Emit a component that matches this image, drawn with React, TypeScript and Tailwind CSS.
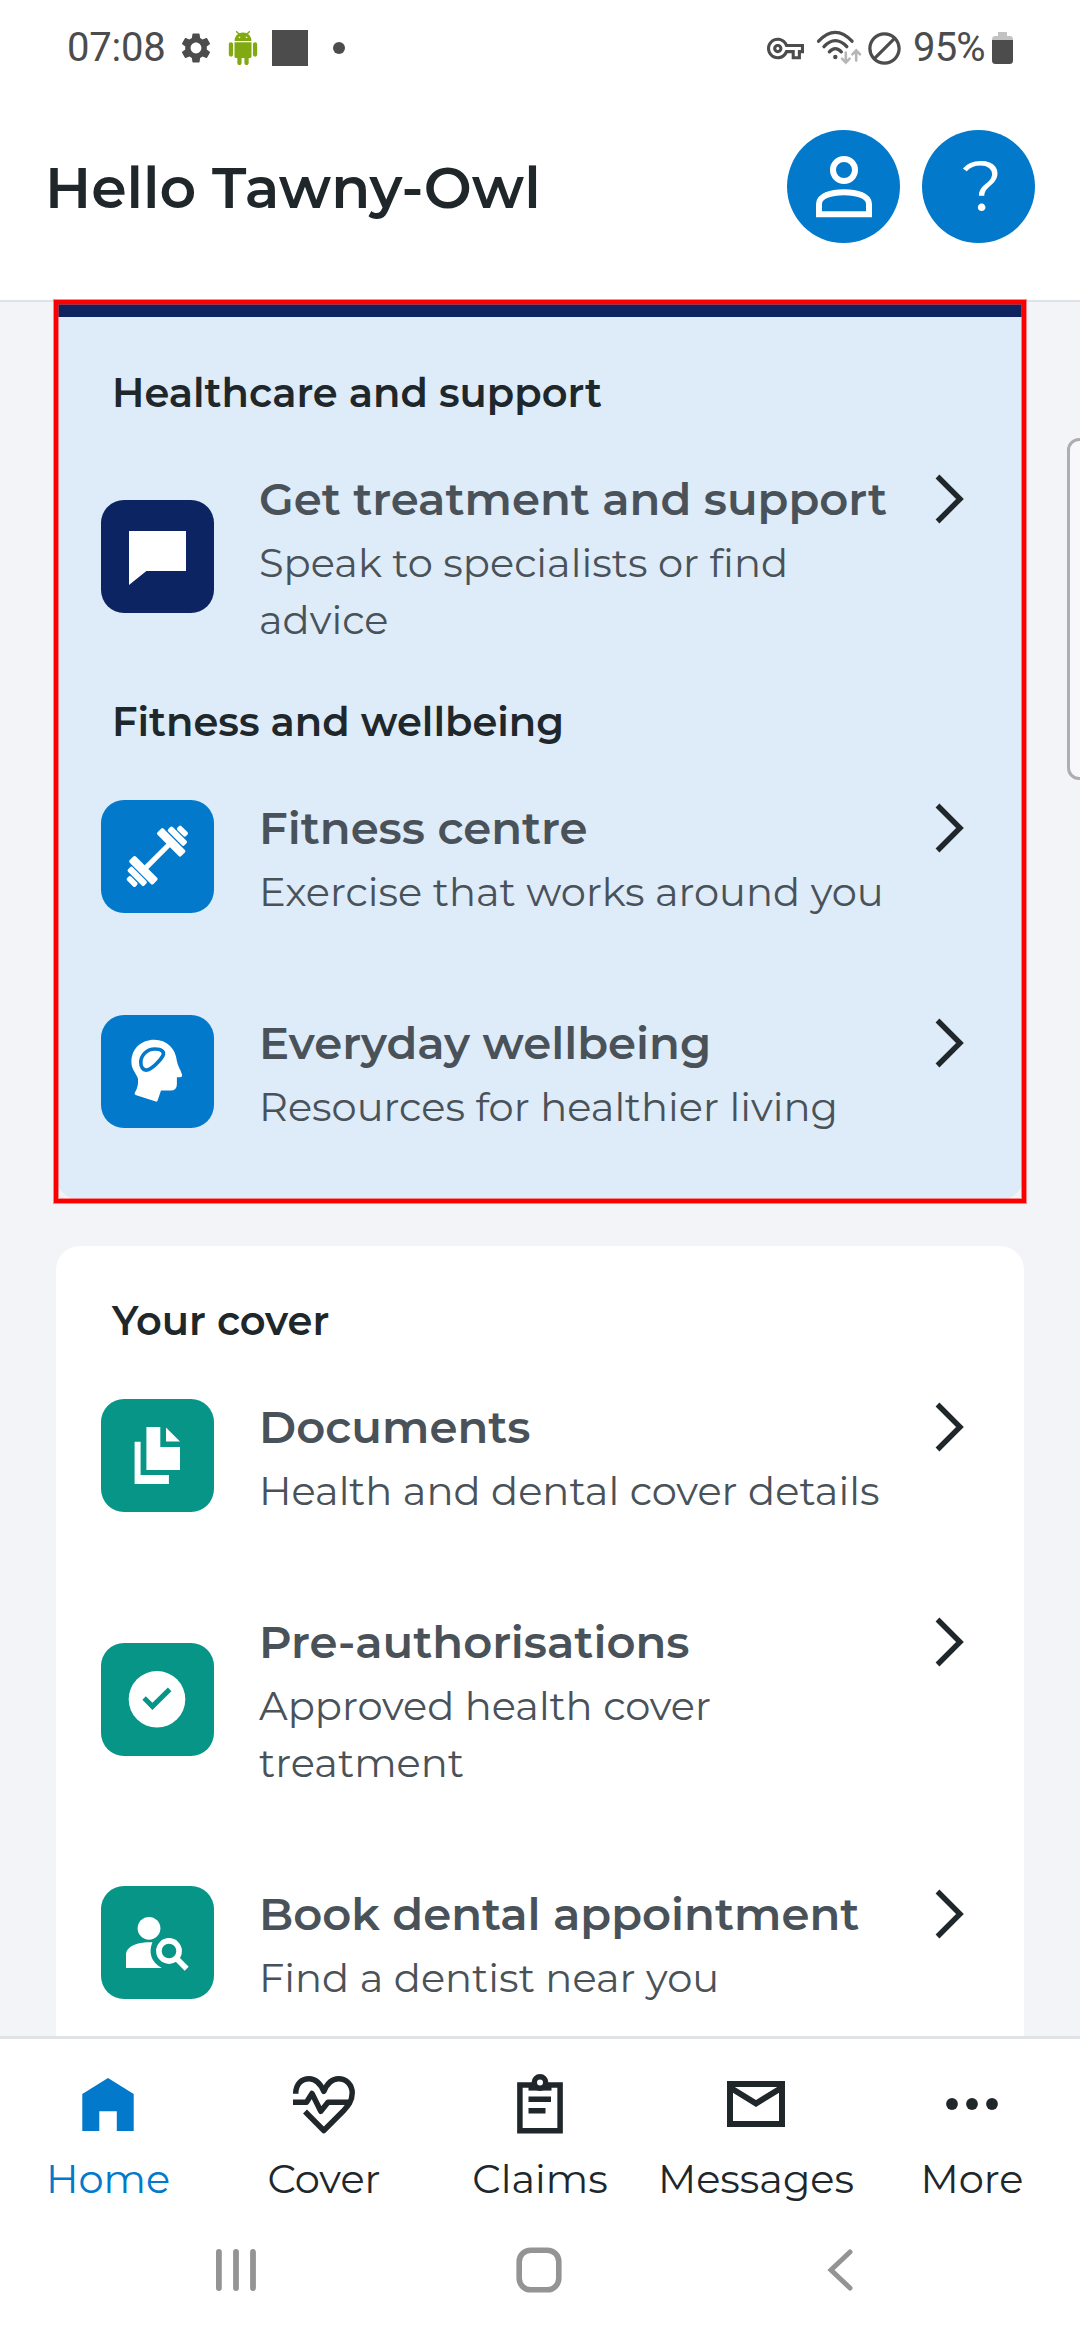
import type { ReactNode } from "react";
import { MdBlock, MdOutlineVpnKey, MdSettings } from "react-icons/md";

const NAVY = "bg-[#0c2461]";
const BLUE = "bg-[#0279cb]";
const TEAL = "bg-[#069586]";

function StatusBar() {
  return (
    <div className="flex h-24 items-center justify-between pl-[67px] pr-[67px] font-[Roboto,sans-serif] text-[40px] leading-none text-[#4c4c4c]">
      <div className="flex items-center">
        <span className="w-[98px] whitespace-nowrap tracking-[-0.2px]">07:08</span>
        <MdSettings className="ml-[13px] size-9" />
        <svg viewBox="0 0 24 24" className="ml-3 h-[34px] w-[34px] fill-[#81a911]">
          <path d="M6 18c0 .55.45 1 1 1h1v3.5c0 .83.67 1.5 1.5 1.5s1.5-.67 1.5-1.5V19h2v3.5c0 .83.67 1.5 1.5 1.5s1.5-.67 1.5-1.5V19h1c.55 0 1-.45 1-1V8H6v10zM3.5 8C2.67 8 2 8.67 2 9.5v7c0 .83.67 1.5 1.5 1.5S5 17.33 5 16.5v-7C5 8.67 4.33 8 3.5 8zm17 0c-.83 0-1.5.67-1.5 1.5v7c0 .83.67 1.5 1.5 1.5s1.5-.67 1.5-1.5v-7c0-.83-.67-1.5-1.5-1.5zm-4.97-5.84l1.3-1.3c.2-.2.2-.51 0-.71-.2-.2-.51-.2-.71 0l-1.48 1.48C13.85 1.23 12.95 1 12 1c-.96 0-1.86.23-2.66.63L7.85.15c-.2-.2-.51-.2-.71 0-.2.2-.2.51 0 .71l1.31 1.31C6.97 3.26 6 5.01 6 7h12c0-1.99-.97-3.75-2.47-4.84zM10 5H9V4h1v1zm5 0h-1V4h1v1z" />
        </svg>
        <span className="ml-3 size-9 bg-[#4c4c4c]" />
        <span className="ml-[25px] size-3 rounded-full bg-[#4c4c4c]" />
      </div>
      <div className="flex items-center">
        <MdOutlineVpnKey className="size-[37px]" />
        <svg viewBox="0 0 46 36" className="ml-[12px] h-9 w-[46px]" fill="none" strokeLinecap="round">
          <g stroke="#4c4c4c" strokeWidth="3.4">
            <path d="M2.6 11.2Q19.3-6.4 36 11.2" />
            <path d="M8 16.6Q19.3 4.6 30.8 16.6" />
            <path d="M13.4 21.8Q19.3 15.4 25.3 21.8" />
          </g>
          <circle cx="19.3" cy="27" r="2.2" fill="#4c4c4c" />
          <g stroke="#b6b6b6" strokeWidth="2.6">
            <path d="M29.8 22.5V32.500M26 28.700L29.800 32.700L33.600 28.700" />
            <path d="M40.200 30.500V20.500M36.400 24.300L40.200 20.300L44 24.300" />
          </g>
        </svg>
        <MdBlock className="ml-[3px] size-[39px]" />
        <span className="ml-[9px] w-[79px] whitespace-nowrap tracking-[-0.8px]">95%</span>
        <svg viewBox="0 0 21 32" className="h-8 w-[21px]">
          <path d="M6 0H15V4H18Q21 4 21 8V12H0V8Q0 4 3 4H6Z" fill="#c2c2c2" />
          <path d="M0 8H21V28.500Q21 32 17.500 32H3.500Q0 32 0 28.500Z" fill="#4c4c4c" />
        </svg>
      </div>
    </div>
  );
}

function Header() {
  return (
    <header className="flex h-[206px] items-start justify-between border-b-2 border-[#dfe2e7] pl-[45px] pr-[45px] pt-[34px]">
      <h1 className="pt-[22px] text-[57px] font-semibold leading-[72px] text-[#20272b]">Hello Tawny-Owl</h1>
      <div className="flex gap-[22px]">
        <button className={`size-[113px] rounded-full ${BLUE}`} aria-label="Profile">
          <svg viewBox="0 0 113 113" className="size-full" fill="none" stroke="#fff" strokeWidth="6">
            <circle cx="57" cy="40" r="11" />
            <path d="M32 84.300V74C32 66 44 62.200 57 62.200S82 66 82 74V84.300Z" />
          </svg>
        </button>
        <button className={`flex size-[113px] items-center justify-center rounded-full text-[72px] leading-none text-white ${BLUE}`} aria-label="Help">
          <span className="pb-1 pl-2">?</span>
        </button>
      </div>
    </header>
  );
}

function Tile({ color, children }: { color: string; children: ReactNode }) {
  return (
    <div className={`size-[113px] shrink-0 rounded-[23px] ${color}`}>
      <svg viewBox="0 0 113 113" className="size-full" fill="#fff">
        {children}
      </svg>
    </div>
  );
}

const chatIcon = <path d="M28 31H85V71H45.400L28 85Z" />;

const dumbbellIcon = (
  <g transform="translate(56.300 56.300) rotate(-45)">
    <rect x="-16" y="-2.600" width="32" height="5.200" />
    <rect x="15.300" y="-16.800" width="8.700" height="33.600" rx="1.800" />
    <rect x="25.200" y="-11.500" width="6.400" height="23" rx="1.800" />
    <rect x="32.800" y="-6" width="5.600" height="12" rx="1.800" />
    <rect x="-24" y="-16.800" width="8.700" height="33.600" rx="1.800" />
    <rect x="-31.600" y="-11.500" width="6.400" height="23" rx="1.800" />
    <rect x="-38.400" y="-6" width="5.600" height="12" rx="1.800" />
  </g>
);

const headIcon = (
  <>
    <path d="M30.400 47C30.400 33.500 40.500 24.800 53.200 24.800C66 24.800 74.500 33.500 75.900 46C76.300 50 79.500 54.500 81 59.500Q81.600 62.300 79 62.300H75.900V69Q75.900 75.600 69.500 75.600H60L56.600 85.600Q56.200 87 54.800 86.600L34.600 80Q33 79.400 33.800 77.800C37 72.500 37.500 68 36.800 63C34.500 57.500 30.400 54 30.400 47Z" />
    <path d="M39.800 47.500C39.800 40 46 34 54 34C60.500 34 64 36.800 61.800 41C59 46 50.500 54.200 46 55C42 55.700 39.800 52 39.800 47.500Z" fill="none" stroke="#0279cb" strokeWidth="3.600" />
  </>
);

const documentsIcon = (
  <>
    <path d="M33.600 42.700H39.600V76H67.900V85H33.600Z" />
    <path d="M45.400 28H59.300V48H79V71H45.400Z" />
    <path d="M65 28.500L79 42.500H65Z" />
  </>
);

const checkIcon = (
  <>
    <circle cx="56" cy="56.300" r="28.300" />
    <path d="M41.400 56.700L44.800 53.200L51.400 59.800L66.900 44.500L70.400 48.200L51.400 67Z" fill="#069586" />
  </>
);

const personSearchIcon = (
  <>
    <circle cx="48" cy="42.300" r="11.400" />
    <path d="M25 82V69C25 60.500 36 56.300 48 56.300H51.400C47.500 66 49.500 76 60.800 82Z" />
    <circle cx="68" cy="65" r="10.100" fill="none" stroke="#fff" strokeWidth="5.600" />
    <path d="M75 72L85.700 82.800" stroke="#fff" strokeWidth="5.600" />
  </>
);

function Row({ color, icon, title, text }: { color: string; icon: ReactNode; title: string; text: string }) {
  return (
    <div className="flex items-center py-11 pl-[45px]">
      <Tile color={color}>{icon}</Tile>
      <div className="ml-[45px] w-[636px] pt-0.5 text-[#4a5259]">
        <div className="whitespace-nowrap text-[45px] font-semibold leading-[66px]">{title}</div>
        <div className="pt-0.5 text-[40px] font-normal leading-[57px]">{text}</div>
      </div>
      <svg viewBox="0 0 30 50" className="ml-[39px] mt-[10px] h-[50px] w-[30px] self-start" fill="none" stroke="#20272b" strokeWidth="5.400">
        <path d="M3.500 2.500L26 25L3.500 47.500" />
      </svg>
    </div>
  );
}

function SectionHeading({ children }: { children: ReactNode }) {
  return <h2 className="h-14 pl-14 pt-[2px] text-[40px] font-semibold leading-[54px] text-[#20272b]">{children}</h2>;
}

function NavItem({ label, active, children }: { label: string; active?: boolean; children: ReactNode }) {
  return (
    <div className={`flex w-[216px] flex-col items-center ${active ? "text-[#0279cb]" : "text-[#20272b]"}`}>
      <div className="flex h-[62px] items-center justify-center">{children}</div>
      <span className="mt-[20px] text-[40px] font-normal leading-[48px]">{label}</span>
    </div>
  );
}

function BottomNav() {
  return (
    <nav className="border-t-[3px] border-[#e0e3e6] bg-white">
      <div className="flex pt-[34px]">
        <NavItem label="Home" active>
          <svg viewBox="0 0 52 53" className="mr-[1px] h-[53px] w-[52px]" fill="currentColor">
            <path d="M26 0L51.700 16V53H34.800V33.200H17.300V53H0.300V16Z" />
          </svg>
        </NavItem>
        <NavItem label="Cover">
          <svg viewBox="0 0 64 62" className="h-[62px] w-16" fill="none" stroke="currentColor" strokeWidth="5.500" strokeLinejoin="round">
            <path d="M3.700 20.700C3.700 11 9.500 5.800 17.200 5.800C24.500 5.800 28.500 11 31.800 18.300C35 11 39.500 5.800 46.500 5.800C54.500 5.800 60.200 12 60.200 20C60.200 28 56 33 51 38.300L31.800 57.500L13 38.500" />
            <path d="M1 29.300H14.500L20 20.500L28.800 38.300L36 29.300H56" />
          </svg>
        </NavItem>
        <NavItem label="Claims">
          <svg viewBox="0 0 48 62" className="h-[62px] w-12" fill="none" stroke="currentColor" strokeWidth="5.500">
            <path d="M3.900 12H44.100V57.800H3.900Z" />
            <path d="M12.500 26.200H35M12.500 37.700H29.500" />
            <path d="M12.500 12H35.500V17.600H12.500Z" fill="currentColor" stroke="none" />
            <circle cx="24" cy="9.500" r="5.700" fill="#fff" strokeWidth="5.400" />
          </svg>
        </NavItem>
        <NavItem label="Messages">
          <svg viewBox="0 0 58 46" className="h-[46px] w-[58px]" fill="none" stroke="currentColor" strokeWidth="6">
            <path d="M3 3H55V43H3Z" />
            <path d="M3 6.500L29 22.500L55 6.500" />
          </svg>
        </NavItem>
        <NavItem label="More">
          <svg viewBox="0 0 52 12" className="h-3 w-[52px]" fill="currentColor">
            <circle cx="6" cy="6" r="5.900" />
            <circle cx="26" cy="6" r="5.900" />
            <circle cx="46" cy="6" r="5.900" />
          </svg>
        </NavItem>
      </div>
    </nav>
  );
}

function SystemNav() {
  return (
    <div className="flex items-start justify-between bg-white pl-[215px] pr-[226px] pt-[44px] text-[#949494]">
      <svg viewBox="0 0 42 46" className="h-[46px] w-[42px]" stroke="currentColor" strokeWidth="5.800" strokeLinecap="round">
        <path d="M3.900 5V41M21 5V41M38 5V41" />
      </svg>
      <svg viewBox="0 0 46 46" className="mr-[6px] h-[46px] w-[46px]" fill="none" stroke="currentColor" strokeWidth="5.600">
        <rect x="3.200" y="3.200" width="39.600" height="39.600" rx="11.500" />
      </svg>
      <svg viewBox="0 0 27 46" className="h-[46px] w-[27px]" fill="none" stroke="currentColor" strokeWidth="5" strokeLinecap="round">
        <path d="M23 5L4 23L23 41" />
      </svg>
    </div>
  );
}

export default function App() {
  return (
    <div className="relative flex h-[2340px] w-[1080px] flex-col overflow-hidden bg-white font-[Montserrat,Inter,sans-serif]">
      <StatusBar />
      <Header />

      <main className="h-[1734px] overflow-hidden bg-[#f2f4f8] px-14">
        <section className="relative h-[898px] rounded-b-3xl border-t-[15px] border-[#0f235f] bg-[#deebf8] pt-[47px]">
          <SectionHeading>Healthcare and support</SectionHeading>
          <Row color={NAVY} icon={chatIcon} title="Get treatment and support" text="Speak to specialists or find advice" />
          <div className="pt-px">
            <SectionHeading>Fitness and wellbeing</SectionHeading>
          </div>
          <Row color={BLUE} icon={dumbbellIcon} title="Fitness centre" text="Exercise that works around you" />
          <Row color={BLUE} icon={headIcon} title="Everyday wellbeing" text="Resources for healthier living" />
        </section>

        <section className="mt-[46px] rounded-t-3xl bg-white pt-[46px]">
          <SectionHeading>Your cover</SectionHeading>
          <Row color={TEAL} icon={documentsIcon} title="Documents" text="Health and dental cover details" />
          <Row color={TEAL} icon={checkIcon} title="Pre-authorisations" text="Approved health cover treatment" />
          <Row color={TEAL} icon={personSearchIcon} title="Book dental appointment" text="Find a dentist near you" />
        </section>
      </main>

      <BottomNav />
      <SystemNav />

      {/* highlight frame over the first card */}
      <div className="pointer-events-none absolute left-[54px] top-[300px] h-[903px] w-[972px] border-4 border-[#fb0000] shadow-[0_0_0_1px_rgba(255,60,60,0.6),inset_0_0_0_1px_rgba(255,60,60,0.6)]" />
      {/* edge panel handle */}
      <div className="absolute left-[1067px] top-[438px] h-[342px] w-10 rounded-xl border-[3px] border-[#acaeb0] bg-[#f8f8fa]" />
    </div>
  );
}
